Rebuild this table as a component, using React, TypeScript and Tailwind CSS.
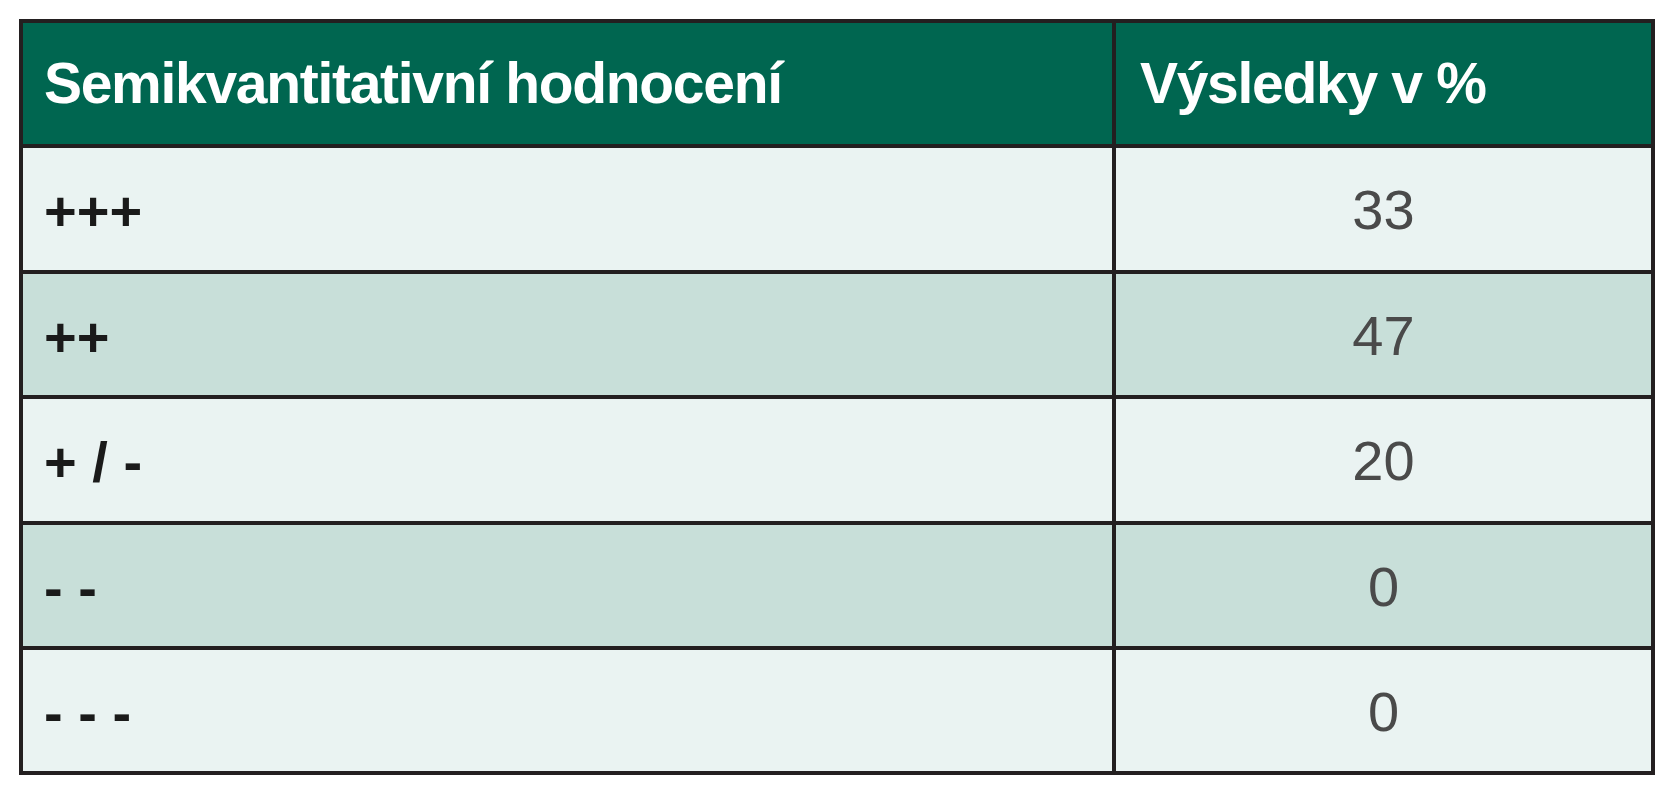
const rows = [
  { label: "+++", value: "33", bg: "bg-[#eaf3f2]", h: "h-[126px]" },
  { label: "++", value: "47", bg: "bg-[#c8dfd9]", h: "h-[125px]" },
  { label: "+ / -", value: "20", bg: "bg-[#eaf3f2]", h: "h-[126px]" },
  { label: "- -", value: "0", bg: "bg-[#c8dfd9]", h: "h-[125px]" },
  { label: "- - -", value: "0", bg: "bg-[#eaf3f2]", h: "h-[125px]" },
];

export default function App() {
  return (
    <div className="min-h-screen bg-white pt-[19px] pl-[19px] font-['Liberation_Sans',Arial,sans-serif]">
      <div className="w-[1636px] border-4 border-[#231f20]">
        {/* hlavicka */}
        <div className="flex h-[121px] bg-[#006650] text-white font-bold text-[57px] tracking-[-1.3px]">
          <div className="w-[1089px] flex items-center pl-[21px] whitespace-nowrap">
            Semikvantitativní hodnocení
          </div>
          <div className="flex-1 flex items-center pl-[24px] border-l-4 border-[#231f20] whitespace-nowrap">
            Výsledky v %
          </div>
        </div>

        {rows.map((row, i) => (
          <div key={i} className={`flex border-t-4 border-[#231f20] ${row.bg} ${row.h}`}>
            <div className="w-[1089px] flex items-center pl-[21px] pt-[4px] text-[56px] font-bold text-[#1a1a1a] whitespace-pre">
              {row.label}
            </div>
            <div className="flex-1 flex items-center justify-center border-l-4 border-[#231f20] pt-[2px] text-[56px] text-[#4a4a4a]">
              {row.value}
            </div>
          </div>
        ))}
      </div>
    </div>
  );
}
